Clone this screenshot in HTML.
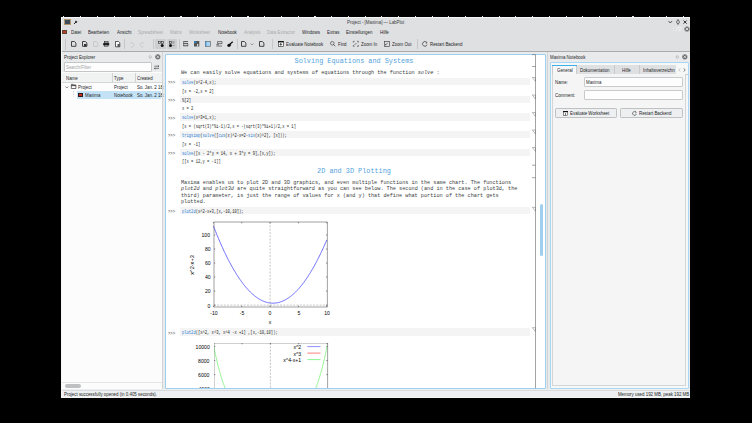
<!DOCTYPE html>
<html><head><meta charset="utf-8">
<style>
html,body{margin:0;padding:0;width:752px;height:423px;overflow:hidden;background:#000;position:relative;}
*{box-sizing:border-box;}
body{font-family:"Liberation Sans",sans-serif;color:#232627;}
.a{position:absolute;}
.t{position:absolute;white-space:nowrap;}
.mono{position:absolute;white-space:nowrap;font-family:"Liberation Mono",monospace;}
svg{position:absolute;overflow:visible;}
</style></head><body>
<div class="a" style="left:61px;top:16.8px;width:629px;height:381px;background:#f4f5f5;"></div>
<div class="a" style="left:62px;top:17.8px;width:628px;height:379.5px;background:#dfe0e1;"></div>
<div class="a" style="left:63.3px;top:15.8px;width:1.2px;height:1.2px;background:#e8e8e8;"></div>
<div class="a" style="left:80.0px;top:15.8px;width:1.2px;height:1.2px;background:#e8e8e8;"></div>
<div class="a" style="left:96.7px;top:15.8px;width:1.2px;height:1.2px;background:#e8e8e8;"></div>
<div class="a" style="left:113.5px;top:15.8px;width:1.2px;height:1.2px;background:#e8e8e8;"></div>
<div class="a" style="left:130.2px;top:15.8px;width:1.2px;height:1.2px;background:#e8e8e8;"></div>
<div class="a" style="left:147.0px;top:15.8px;width:1.2px;height:1.2px;background:#e8e8e8;"></div>
<div class="a" style="left:163.7px;top:15.8px;width:1.2px;height:1.2px;background:#e8e8e8;"></div>
<div class="a" style="left:180.4px;top:15.8px;width:1.2px;height:1.2px;background:#e8e8e8;"></div>
<div class="a" style="left:197.2px;top:15.8px;width:1.2px;height:1.2px;background:#e8e8e8;"></div>
<div class="a" style="left:213.9px;top:15.8px;width:1.2px;height:1.2px;background:#e8e8e8;"></div>
<div class="a" style="left:230.7px;top:15.8px;width:1.2px;height:1.2px;background:#e8e8e8;"></div>
<div class="a" style="left:247.4px;top:15.8px;width:1.2px;height:1.2px;background:#e8e8e8;"></div>
<div class="a" style="left:264.1px;top:15.8px;width:1.2px;height:1.2px;background:#e8e8e8;"></div>
<div class="a" style="left:280.9px;top:15.8px;width:1.2px;height:1.2px;background:#e8e8e8;"></div>
<div class="a" style="left:297.6px;top:15.8px;width:1.2px;height:1.2px;background:#e8e8e8;"></div>
<div class="a" style="left:314.4px;top:15.8px;width:1.2px;height:1.2px;background:#e8e8e8;"></div>
<div class="a" style="left:331.1px;top:15.8px;width:1.2px;height:1.2px;background:#e8e8e8;"></div>
<div class="a" style="left:347.8px;top:15.8px;width:1.2px;height:1.2px;background:#e8e8e8;"></div>
<div class="a" style="left:364.6px;top:15.8px;width:1.2px;height:1.2px;background:#e8e8e8;"></div>
<div class="a" style="left:381.3px;top:15.8px;width:1.2px;height:1.2px;background:#e8e8e8;"></div>
<div class="a" style="left:398.1px;top:15.8px;width:1.2px;height:1.2px;background:#e8e8e8;"></div>
<div class="a" style="left:414.8px;top:15.8px;width:1.2px;height:1.2px;background:#e8e8e8;"></div>
<div class="a" style="left:431.5px;top:15.8px;width:1.2px;height:1.2px;background:#e8e8e8;"></div>
<div class="a" style="left:448.3px;top:15.8px;width:1.2px;height:1.2px;background:#e8e8e8;"></div>
<div class="a" style="left:465.0px;top:15.8px;width:1.2px;height:1.2px;background:#e8e8e8;"></div>
<div class="a" style="left:481.8px;top:15.8px;width:1.2px;height:1.2px;background:#e8e8e8;"></div>
<div class="a" style="left:498.5px;top:15.8px;width:1.2px;height:1.2px;background:#e8e8e8;"></div>
<div class="a" style="left:515.2px;top:15.8px;width:1.2px;height:1.2px;background:#e8e8e8;"></div>
<div class="a" style="left:532.0px;top:15.8px;width:1.2px;height:1.2px;background:#e8e8e8;"></div>
<div class="a" style="left:548.7px;top:15.8px;width:1.2px;height:1.2px;background:#e8e8e8;"></div>
<div class="a" style="left:565.5px;top:15.8px;width:1.2px;height:1.2px;background:#e8e8e8;"></div>
<div class="a" style="left:582.2px;top:15.8px;width:1.2px;height:1.2px;background:#e8e8e8;"></div>
<div class="a" style="left:598.9px;top:15.8px;width:1.2px;height:1.2px;background:#e8e8e8;"></div>
<div class="a" style="left:615.7px;top:15.8px;width:1.2px;height:1.2px;background:#e8e8e8;"></div>
<div class="a" style="left:632.4px;top:15.8px;width:1.2px;height:1.2px;background:#e8e8e8;"></div>
<div class="a" style="left:649.2px;top:15.8px;width:1.2px;height:1.2px;background:#e8e8e8;"></div>
<div class="a" style="left:665.9px;top:15.8px;width:1.2px;height:1.2px;background:#e8e8e8;"></div>
<div class="a" style="left:682.6px;top:15.8px;width:1.2px;height:1.2px;background:#e8e8e8;"></div>
<div class="a" style="left:62px;top:52px;width:628px;height:337px;background:#e9eaeb;"></div>
<div class="a" style="left:62px;top:389px;width:628px;height:8.3px;background:#eeeff0;"></div>
<div class="a" style="left:62px;top:389.8px;width:628px;height:0.7px;background:#d9dadb;"></div>
<div class="a" style="left:64px;top:19px;width:6.5px;height:5.5px;background:#3d4d5c;border:0.6px solid #b09870;"></div>
<svg style="left:73px;top:19.5px" width="5" height="5"><path d="M1,4 L3,2 M2.2,1.2 L3.8,2.8 M3,0.8 L4.2,2" stroke="#222" stroke-width="1" fill="none"/></svg>
<div class="t" style="left:347px;top:19.00px;font-size:5.19px;line-height:6px;transform:scaleX(0.847);transform-origin:0 50%;color:#3a3c3e;">Project - [Maxima] — LabPlot</div>
<svg style="left:667.5px;top:20px" width="5" height="4"><path d="M0.5,1 L2.3,3 L4.1,1" stroke="#333" stroke-width="0.8" fill="none"/></svg>
<svg style="left:675.5px;top:19px" width="4" height="6"><path d="M2,0.5 L3.5,3 L2,5.5 L0.5,3 Z" stroke="#333" stroke-width="0.7" fill="none"/></svg>
<svg style="left:683px;top:19.8px" width="5" height="5"><path d="M0.5,0.5 L3.7,3.7 M3.7,0.5 L0.5,3.7" stroke="#333" stroke-width="1" fill="none"/></svg>
<svg style="left:672.5px;top:27px" width="10" height="5"><rect x="0" y="0" width="3.8" height="3.6" fill="#f0f0f0"/><rect x="4.8" y="0" width="3.8" height="3.6" fill="#f0f0f0"/><path d="M0.5,1 H3.3 M0.5,2.6 H3.3 M5.3,2.6 L6.7,1 L8.1,2.6" stroke="#bbb" stroke-width="0.5" fill="none"/></svg>
<svg style="left:683.5px;top:26px" width="6" height="6"><circle cx="3" cy="3" r="2.6" fill="#707274"/><path d="M1.6,1.6 L4.4,4.4 M4.4,1.6 L1.6,4.4" stroke="#f4f4f4" stroke-width="0.75"/></svg>
<div class="a" style="left:62px;top:30px;width:5px;height:4px;background:#c0392b;border:0.6px solid #5a4a30;"></div>
<div class="t" style="left:71px;top:29.00px;font-size:5.19px;line-height:6px;transform:scaleX(0.847);transform-origin:0 50%;color:#232527;">Datei</div>
<div class="t" style="left:88px;top:29.00px;font-size:5.19px;line-height:6px;transform:scaleX(0.847);transform-origin:0 50%;color:#232527;">Bearbeiten</div>
<div class="t" style="left:117px;top:29.00px;font-size:5.19px;line-height:6px;transform:scaleX(0.847);transform-origin:0 50%;color:#232527;">Ansicht</div>
<div class="t" style="left:137.5px;top:29.00px;font-size:5.19px;line-height:6px;transform:scaleX(0.847);transform-origin:0 50%;color:#a9abad;">Spreadsheet</div>
<div class="t" style="left:169.7px;top:29.00px;font-size:5.19px;line-height:6px;transform:scaleX(0.847);transform-origin:0 50%;color:#a9abad;">Matrix</div>
<div class="t" style="left:189.4px;top:29.00px;font-size:5.19px;line-height:6px;transform:scaleX(0.847);transform-origin:0 50%;color:#a9abad;">Worksheet</div>
<div class="t" style="left:217.6px;top:29.00px;font-size:5.19px;line-height:6px;transform:scaleX(0.847);transform-origin:0 50%;color:#232527;">Notebook</div>
<div class="t" style="left:244.3px;top:29.00px;font-size:5.19px;line-height:6px;transform:scaleX(0.847);transform-origin:0 50%;color:#a9abad;">Analysis</div>
<div class="t" style="left:267px;top:29.00px;font-size:5.19px;line-height:6px;transform:scaleX(0.847);transform-origin:0 50%;color:#a9abad;">Data Extractor</div>
<div class="t" style="left:302.3px;top:29.00px;font-size:5.19px;line-height:6px;transform:scaleX(0.847);transform-origin:0 50%;color:#232527;">Windows</div>
<div class="t" style="left:327.2px;top:29.00px;font-size:5.19px;line-height:6px;transform:scaleX(0.847);transform-origin:0 50%;color:#232527;">Extras</div>
<div class="t" style="left:345.8px;top:29.00px;font-size:5.19px;line-height:6px;transform:scaleX(0.847);transform-origin:0 50%;color:#232527;">Einstellungen</div>
<div class="t" style="left:380px;top:29.00px;font-size:5.19px;line-height:6px;transform:scaleX(0.847);transform-origin:0 50%;color:#232527;">Hilfe</div>
<div class="a" style="left:65.2px;top:38.5px;width:1px;height:11px;background:#c2c4c6;"></div>
<div class="a" style="left:124.4px;top:39px;width:0.8px;height:10px;background:#c4c6c8;"></div>
<div class="a" style="left:153.1px;top:39px;width:0.8px;height:10px;background:#c4c6c8;"></div>
<div class="a" style="left:178.8px;top:39px;width:0.8px;height:10px;background:#c4c6c8;"></div>
<div class="a" style="left:236.8px;top:39px;width:0.8px;height:10px;background:#c4c6c8;"></div>
<div class="a" style="left:271.9px;top:39px;width:0.8px;height:10px;background:#c4c6c8;"></div>
<div class="a" style="left:416.8px;top:39px;width:0.8px;height:10px;background:#c4c6c8;"></div>
<div class="a" style="left:155.1px;top:39px;width:10.8px;height:10.2px;background:#cdcecf;border-radius:1px;"></div>
<div class="a" style="left:166.7px;top:39px;width:10.1px;height:10.2px;background:#cdcecf;border-radius:1px;"></div>
<svg style="left:70.5px;top:41.2px" width="6.4" height="6.8"><path d="M0.5,0.5 L3.4,0.5 L4.9,2 L4.9,5.3 L0.5,5.3 Z" stroke="#333" stroke-width="0.9" fill="none"/></svg>
<svg style="left:81.5px;top:41.2px" width="6.4" height="6.8"><path d="M0.5,0.5 L3.4,0.5 L4.9,2 L4.9,5.3 L0.5,5.3 Z" stroke="#333" stroke-width="0.9" fill="none"/></svg>
<svg style="left:84px;top:44px" width="3" height="3"><rect x="0" y="0" width="2.5" height="2.5" fill="#333"/></svg>
<svg style="left:92.7px;top:41.2px" width="6.4" height="6.8"><path d="M0.5,0.5 L3.4,0.5 L4.9,2 L4.9,5.3 L0.5,5.3 Z" stroke="#c4c6c8" stroke-width="0.9" fill="none"/></svg>
<svg style="left:103px;top:41px" width="7" height="6"><rect x="1.3" y="0.3" width="3.8" height="1.6" fill="none" stroke="#222" stroke-width="0.6"/><rect x="0.2" y="2" width="6" height="2.4" fill="#222"/><rect x="1.5" y="4.2" width="3.5" height="1.3" fill="#fff" stroke="#222" stroke-width="0.5"/></svg>
<svg style="left:115px;top:41px" width="6" height="7"><path d="M0.5,0.5 L3.5,0.5 L4.8,1.8 L4.8,5.8 L0.5,5.8 Z" fill="#fff" stroke="#333" stroke-width="0.8"/><path d="M2.5,3 L4.8,3 L4.8,5.8 L2.5,5.8 Z" fill="#555"/></svg>
<svg style="left:128.8px;top:42px" width="6" height="6"><path d="M1,1.5 A2.2,2.2 0 1 1 1.8,4.8" stroke="#c0c2c4" stroke-width="0.7" fill="none"/></svg>
<svg style="left:139.6px;top:42px" width="6" height="6"><path d="M4.3,1.5 A2.2,2.2 0 1 0 3.5,4.8" stroke="#c0c2c4" stroke-width="0.7" fill="none"/></svg>
<svg style="left:157.5px;top:41px" width="7" height="7"><rect x="0.3" y="0.3" width="2.2" height="2" fill="none" stroke="#333" stroke-width="0.6"/><rect x="3.3" y="0.3" width="2.2" height="2" fill="none" stroke="#333" stroke-width="0.6"/><circle cx="4.2" cy="4.6" r="1.5" fill="#111"/></svg>
<svg style="left:168.5px;top:41px" width="7" height="7"><rect x="0.3" y="0.3" width="2.2" height="2" fill="none" stroke="#333" stroke-width="0.6"/><path d="M3.3,0.8 H5.5 M3.3,2 H5.5 M3.3,4.5 H5.5" stroke="#555" stroke-width="0.5"/><circle cx="1.5" cy="4.6" r="1.5" fill="#111"/></svg>
<svg style="left:182.8px;top:41.3px" width="6" height="6"><path d="M0.3,0.6 H5 M0.3,2.6 H5 M0.3,4.8 H5" stroke="#444" stroke-width="0.9"/><path d="M0.6,0.6 V5 M4.8,2.6 V5" stroke="#444" stroke-width="0.6"/></svg>
<svg style="left:193.6px;top:41.3px" width="6" height="6"><rect x="0" y="0" width="5.3" height="5.5" fill="#555"/><rect x="0.3" y="0.3" width="1.8" height="1.8" fill="#2a8ed8"/><rect x="3" y="3" width="1.2" height="2.5" fill="#ddd"/></svg>
<svg style="left:204.7px;top:41.3px" width="6" height="6"><rect x="0.3" y="0.3" width="5" height="5" fill="#a8d4f4" stroke="#555" stroke-width="0.6"/><path d="M1,0.3 V5.3" stroke="#2a8ed8" stroke-width="0.7"/></svg>
<svg style="left:215.5px;top:41.3px" width="7" height="6"><path d="M1.5,0.6 H6 V2.6 H1.5 Z M0.3,3.6 H3 M0.3,5 H6" stroke="#444" stroke-width="0.7" fill="none"/></svg>
<svg style="left:226.7px;top:41px" width="7" height="7"><path d="M0.5,5.5 L2.5,2.5 L4.5,4 Z" fill="#111"/><path d="M3,3 L5.8,0.8" stroke="#111" stroke-width="1.3"/><circle cx="2" cy="4.3" r="1.6" fill="#111"/></svg>
<svg style="left:241px;top:41.2px" width="6.4" height="6.8"><path d="M0.5,0.5 L3.4,0.5 L4.9,2 L4.9,5.3 L0.5,5.3 Z" stroke="#333" stroke-width="0.9" fill="none"/></svg>
<svg style="left:250.4px;top:43px" width="5" height="3"><path d="M0.5,0.5 L2,2 L3.5,0.5" stroke="#666" stroke-width="0.6" fill="none"/></svg>
<svg style="left:259.1px;top:41.2px" width="6.4" height="6.8"><path d="M0.5,0.5 L3.4,0.5 L4.9,2 L4.9,5.3 L0.5,5.3 Z" stroke="#333" stroke-width="0.9" fill="none"/></svg>
<svg style="left:277.9px;top:41px" width="6" height="6"><rect x="0.3" y="0.3" width="5" height="5" fill="#fff" stroke="#222" stroke-width="0.6"/><rect x="0" y="0" width="5.6" height="1.4" fill="#111"/><path d="M2.8,2.3 L1.8,3.5 H3.8 Z M2.8,3.3 V5" stroke="#222" stroke-width="0.5" fill="#222"/></svg>
<div class="t" style="left:285.8px;top:41.20px;font-size:5.19px;line-height:6px;transform:scaleX(0.847);transform-origin:0 50%;color:#232527;">Evaluate Notebook</div>
<svg style="left:329.5px;top:41px" width="6" height="6"><circle cx="2.3" cy="2.3" r="1.8" stroke="#333" stroke-width="0.6" fill="none"/><path d="M3.5,3.5 L5.3,5.3" stroke="#333" stroke-width="0.7"/></svg>
<div class="t" style="left:337.8px;top:41.20px;font-size:5.19px;line-height:6px;transform:scaleX(0.847);transform-origin:0 50%;color:#232527;">Find</div>
<svg style="left:353px;top:41px" width="6" height="6"><path d="M0.3,1.6 V0.3 H1.6 M4,0.3 H5.3 V1.6 M5.3,4 V5.3 H4 M1.6,5.3 H0.3 V4" stroke="#333" stroke-width="0.6" fill="none"/><path d="M1.5,4 L3.5,2" stroke="#333" stroke-width="0.6"/></svg>
<div class="t" style="left:360.7px;top:41.20px;font-size:5.19px;line-height:6px;transform:scaleX(0.847);transform-origin:0 50%;color:#232527;">Zoom In</div>
<svg style="left:384.3px;top:41px" width="6" height="6"><rect x="0.3" y="0.3" width="5" height="5" stroke="#333" stroke-width="0.6" fill="none"/><path d="M1.5,4 L3.8,1.7 M2.3,4 H1.5 V3.2" stroke="#333" stroke-width="0.6" fill="none"/></svg>
<div class="t" style="left:392px;top:41.20px;font-size:5.19px;line-height:6px;transform:scaleX(0.847);transform-origin:0 50%;color:#232527;">Zoom Out</div>
<svg style="left:421.8px;top:41.2px" width="6" height="6"><path d="M4.6,1.5 A2.3,2.3 0 1 0 5,3.6" stroke="#333" stroke-width="0.7" fill="none"/><path d="M3.8,0.6 L5.2,1.6 L4,2.6" stroke="#333" stroke-width="0.6" fill="none"/></svg>
<div class="t" style="left:429.8px;top:41.20px;font-size:5.19px;line-height:6px;transform:scaleX(0.847);transform-origin:0 50%;color:#232527;">Restart Backend</div>
<div class="a" style="left:62px;top:51px;width:628px;height:0.9px;background:#a9abad;"></div>
<div class="t" style="left:64.2px;top:53.70px;font-size:5.19px;line-height:6px;transform:scaleX(0.847);transform-origin:0 50%;color:#232527;">Project Explorer</div>
<svg style="left:147.5px;top:54.5px" width="5" height="5"><path d="M2.2,0.5 L3.6,2 L2.2,3.5 L0.8,2 Z" stroke="#888" stroke-width="0.5" fill="none"/></svg>
<svg style="left:154.5px;top:53.8px" width="6" height="6"><circle cx="2.8" cy="2.8" r="2.6" fill="#707274"/><path d="M1.5,1.5 L4.1,4.1 M4.1,1.5 L1.5,4.1" stroke="#f0f0f0" stroke-width="0.7"/></svg>
<div class="a" style="left:63.5px;top:62px;width:88px;height:9.8px;background:#fdfdfd;border:0.7px solid #c4c6c8;border-radius:1px;"></div>
<div class="t" style="left:65.8px;top:64.00px;font-size:5.19px;line-height:6px;transform:scaleX(0.847);transform-origin:0 50%;color:#a2a4a6;">Search/Filter</div>
<svg style="left:153.8px;top:64.5px" width="6" height="5"><path d="M0.3,1.2 H5 M0.3,3.4 H5" stroke="#333" stroke-width="0.6"/><path d="M3.8,0.2 L5,1.2 L3.8,2.2 M1.5,2.4 L0.3,3.4 L1.5,4.4" stroke="#333" stroke-width="0.5" fill="none"/></svg>
<div class="a" style="left:62px;top:72.2px;width:99.5px;height:316.5px;background:#fcfcfc;"></div>
<div class="a" style="left:62px;top:73px;width:99.5px;height:9px;background:#f1f2f2;"></div>
<div class="a" style="left:62px;top:82px;width:99.5px;height:0.6px;background:#d6d7d8;"></div>
<div class="a" style="left:111.5px;top:73px;width:0.7px;height:9px;background:#d0d1d2;"></div>
<div class="a" style="left:135.2px;top:73px;width:0.7px;height:9px;background:#d0d1d2;"></div>
<div class="t" style="left:65.5px;top:74.50px;font-size:5.19px;line-height:6px;transform:scaleX(0.847);transform-origin:0 50%;color:#232527;">Name</div>
<div class="t" style="left:113.6px;top:74.50px;font-size:5.19px;line-height:6px;transform:scaleX(0.847);transform-origin:0 50%;color:#232527;">Type</div>
<div class="t" style="left:136.8px;top:74.50px;font-size:5.19px;line-height:6px;transform:scaleX(0.847);transform-origin:0 50%;color:#232527;">Created</div>
<svg style="left:65px;top:85.6px" width="4" height="3"><path d="M0.4,0.5 L1.9,2 L3.4,0.5" stroke="#444" stroke-width="0.6" fill="none"/></svg>
<svg style="left:71px;top:84px" width="6" height="6"><path d="M0.35,0.35 H2.2 L2.7,1 H4.9 V4.5 H0.35 Z" stroke="#333" stroke-width="0.7" fill="none"/><path d="M0.35,1.6 H4.9" stroke="#333" stroke-width="0.9"/></svg>
<div class="t" style="left:78.2px;top:84.00px;font-size:5.19px;line-height:6px;transform:scaleX(0.847);transform-origin:0 50%;color:#232527;">Project</div>
<div class="t" style="left:113.6px;top:84.00px;font-size:5.19px;line-height:6px;transform:scaleX(0.847);transform-origin:0 50%;color:#232527;">Project</div>
<div class="t" style="left:136.8px;top:84.00px;font-size:5.19px;line-height:6px;transform:scaleX(0.847);transform-origin:0 50%;color:#232527;">So. Jan. 2 18:</div>
<svg style="left:73px;top:90.5px" width="2" height="6"><path d="M0.6,0 V5.5" stroke="#999" stroke-width="0.5" stroke-dasharray="0.8,0.8"/></svg>
<div class="a" style="left:76.8px;top:91.2px;width:84.7px;height:8.2px;background:#c4e2f6;"></div>
<div class="a" style="left:77.7px;top:93px;width:5.3px;height:4.4px;background:#d02a20;border:0.8px solid #2b2020;"></div>
<div class="t" style="left:85px;top:92.20px;font-size:5.19px;line-height:6px;transform:scaleX(0.847);transform-origin:0 50%;color:#232527;">Maxima</div>
<div class="t" style="left:113.6px;top:92.20px;font-size:5.19px;line-height:6px;transform:scaleX(0.847);transform-origin:0 50%;color:#232527;">Notebook</div>
<div class="t" style="left:136.8px;top:92.20px;font-size:5.19px;line-height:6px;transform:scaleX(0.847);transform-origin:0 50%;color:#232527;">So. Jan. 2 18:</div>
<div class="a" style="left:62px;top:382px;width:99.5px;height:0.6px;background:#e3e4e5;"></div>
<div class="a" style="left:65px;top:384px;width:16px;height:3.6px;background:#bfc0c1;border-radius:2px;"></div>
<div class="a" style="left:161.6px;top:52px;width:0.8px;height:337px;background:#d3d4d5;"></div>
<div class="a" style="left:165px;top:54px;width:381px;height:335px;background:#fff;border:1px solid #9dd0f0;border-radius:1px;"></div>
<div class="a" style="left:546.8px;top:52px;width:0.8px;height:337px;background:#d3d4d5;"></div>
<div class="t" style="left:550px;top:53.70px;font-size:5.19px;line-height:6px;transform:scaleX(0.847);transform-origin:0 50%;color:#232527;">Maxima Notebook</div>
<svg style="left:674.5px;top:54.5px" width="5" height="5"><path d="M2.2,0.5 L3.6,2 L2.2,3.5 L0.8,2 Z" stroke="#888" stroke-width="0.5" fill="none"/></svg>
<svg style="left:681.5px;top:53.8px" width="6" height="6"><circle cx="2.8" cy="2.8" r="2.6" fill="#707274"/><path d="M1.5,1.5 L4.1,4.1 M4.1,1.5 L1.5,4.1" stroke="#f0f0f0" stroke-width="0.7"/></svg>
<div class="a" style="left:549.5px;top:61.8px;width:139.5px;height:327.5px;background:#f6f7f7;border:0.8px solid #a9d7f3;border-radius:1px;"></div>
<div class="a" style="left:577.2px;top:65px;width:37.5px;height:8.6px;background:#dfe0e1;border-right:0.6px solid #c9cacb;"></div>
<div class="a" style="left:614.7px;top:65px;width:25.7px;height:8.6px;background:#dfe0e1;border-right:0.6px solid #c9cacb;"></div>
<div class="a" style="left:640.4px;top:65px;width:35.3px;height:8.6px;background:#dfe0e1;"></div>
<div class="a" style="left:551.9px;top:64.6px;width:25.3px;height:9.5px;background:#f6f7f7;border-left:0.6px solid #c9cacb;border-right:0.6px solid #c9cacb;"></div>
<div class="a" style="left:551.9px;top:64.6px;width:25.3px;height:1.1px;background:#3daee9;"></div>
<div class="a" style="left:551.9px;top:73.6px;width:136px;height:0.6px;background:#c9cacb;"></div>
<div class="a" style="left:577.2px;top:73.6px;width:0px;height:0px;"></div>
<div class="t" style="left:556.8px;top:66.50px;font-size:5.19px;line-height:6px;transform:scaleX(0.847);transform-origin:0 50%;color:#232527;">General</div>
<div class="t" style="left:580.2px;top:66.50px;font-size:5.19px;line-height:6px;transform:scaleX(0.847);transform-origin:0 50%;color:#232527;">Dokumentation</div>
<div class="t" style="left:622.3px;top:66.50px;font-size:5.19px;line-height:6px;transform:scaleX(0.847);transform-origin:0 50%;color:#232527;">Hilfe</div>
<div class="t" style="left:642.5px;top:66.50px;font-size:5.19px;line-height:6px;transform:scaleX(0.847);transform-origin:0 50%;color:#232527;width:39.5px;overflow:hidden;">Inhaltsverzeichn</div>
<svg style="left:677.5px;top:67.5px" width="3" height="4"><path d="M2.2,0.4 L0.8,2 L2.2,3.6" stroke="#999" stroke-width="0.5" fill="none"/></svg>
<svg style="left:683px;top:67.5px" width="3" height="4"><path d="M0.8,0.4 L2.2,2 L0.8,3.6" stroke="#333" stroke-width="0.6" fill="none"/></svg>
<div class="a" style="left:551.9px;top:73.6px;width:134.2px;height:312.6px;background:#f4f5f4;border:0.6px solid #d4d5d6;border-top:none;"></div>
<div class="t" style="left:554.5px;top:79.20px;font-size:5.19px;line-height:6px;transform:scaleX(0.847);transform-origin:0 50%;color:#232527;">Name:</div>
<div class="a" style="left:583.9px;top:77.4px;width:98.8px;height:9.2px;background:#fdfdfd;border:0.6px solid #c8cacb;border-radius:1px;"></div>
<div class="t" style="left:586.1px;top:79.10px;font-size:5.19px;line-height:6px;transform:scaleX(0.847);transform-origin:0 50%;color:#232527;">Maxima</div>
<div class="t" style="left:554.5px;top:91.70px;font-size:5.19px;line-height:6px;transform:scaleX(0.847);transform-origin:0 50%;color:#232527;">Comment:</div>
<div class="a" style="left:583.9px;top:89.6px;width:98.8px;height:10px;background:#fdfdfd;border:0.6px solid #c8cacb;border-radius:1px;"></div>
<div class="a" style="left:555px;top:108.3px;width:62.3px;height:10px;background:#eeeff0;border:0.6px solid #bfc1c3;border-radius:1.2px;"></div>
<div class="a" style="left:620.4px;top:108.3px;width:62.3px;height:10px;background:#eeeff0;border:0.6px solid #bfc1c3;border-radius:1.2px;"></div>
<svg style="left:563.3px;top:111px" width="5" height="5"><rect x="0.3" y="0.3" width="4.4" height="4.4" fill="#fff" stroke="#222" stroke-width="0.5"/><rect x="0" y="0" width="5" height="1.2" fill="#111"/><path d="M2.5,2 V4.4" stroke="#222" stroke-width="0.6"/></svg>
<div class="t" style="left:569.7px;top:110.30px;font-size:5.19px;line-height:6px;transform:scaleX(0.847);transform-origin:0 50%;color:#232527;">Evaluate Worksheet</div>
<svg style="left:632px;top:110.8px" width="5" height="5"><path d="M3.9,1.2 A1.9,1.9 0 1 0 4.3,2.9" stroke="#333" stroke-width="0.6" fill="none"/><path d="M3.2,0.4 L4.4,1.3 L3.3,2.2" stroke="#333" stroke-width="0.5" fill="none"/></svg>
<div class="t" style="left:638.5px;top:110.30px;font-size:5.19px;line-height:6px;transform:scaleX(0.847);transform-origin:0 50%;color:#232527;">Restart Backend</div>
<div class="t" style="left:64.1px;top:391.40px;font-size:5.19px;line-height:6px;transform:scaleX(0.847);transform-origin:0 50%;color:#232527;">Project successfully opened (in 0.405 seconds).</div>
<div class="t" style="right:63.200000000000045px;top:391.40px;font-size:5.19px;line-height:6px;transform:scaleX(0.847);transform-origin:100% 50%;color:#232527;">Memory used 192 MB, peak 192 MB</div>
<div class="mono" style="left:204px;width:300px;text-align:center;top:56.10px;font-size:6.84px;line-height:10px;color:#52a3dc;transform:scaleX(1.000);transform-origin:50% 50%;">Solving Equations and Systems</div>
<div class="mono" style="left:181.2px;top:69.00px;font-size:5.82px;line-height:8px;color:#3a3d40;transform:scaleX(0.893);transform-origin:0 50%;">We can easily solve equations and systems of equations through the function <i>solve</i> :</div>
<div class="a" style="left:180px;top:77.89999999999999px;width:350px;height:7.6px;background:#f4f4f4;"></div>
<div class="mono" style="left:167.8px;top:79.40px;font-size:4.88px;line-height:8px;color:#333;transform:scaleX(0.800);transform-origin:0 50%;">&gt;&gt;&gt;</div>
<div class="mono" style="left:181.8px;top:79.00px;font-size:4.94px;line-height:8px;color:#1c1e20;transform:scaleX(0.769);transform-origin:0 50%;"><span style="color:#2a7fd4">solve</span>(x^2-4,x);</div>
<div class="mono" style="left:181.8px;top:87.70px;font-size:4.94px;line-height:8px;color:#1c1e20;transform:scaleX(0.769);transform-origin:0 50%;">[x = -2,x = 2]</div>
<div class="a" style="left:180px;top:95.54999999999998px;width:350px;height:7.6px;background:#f4f4f4;"></div>
<div class="mono" style="left:167.8px;top:97.05px;font-size:4.88px;line-height:8px;color:#333;transform:scaleX(0.800);transform-origin:0 50%;">&gt;&gt;&gt;</div>
<div class="mono" style="left:181.8px;top:96.65px;font-size:4.94px;line-height:8px;color:#1c1e20;transform:scaleX(0.769);transform-origin:0 50%;">%[2]</div>
<div class="mono" style="left:181.8px;top:105.35px;font-size:4.94px;line-height:8px;color:#1c1e20;transform:scaleX(0.769);transform-origin:0 50%;">x = 2</div>
<div class="a" style="left:180px;top:113.19999999999999px;width:350px;height:7.6px;background:#f4f4f4;"></div>
<div class="mono" style="left:167.8px;top:114.70px;font-size:4.88px;line-height:8px;color:#333;transform:scaleX(0.800);transform-origin:0 50%;">&gt;&gt;&gt;</div>
<div class="mono" style="left:181.8px;top:114.30px;font-size:4.94px;line-height:8px;color:#1c1e20;transform:scaleX(0.769);transform-origin:0 50%;"><span style="color:#2a7fd4">solve</span>(x^3=1,x);</div>
<div class="mono" style="left:181.8px;top:123.00px;font-size:4.94px;line-height:8px;color:#1c1e20;transform:scaleX(0.769);transform-origin:0 50%;">[x = (sqrt(3)*%i-1)/2,x = -(sqrt(3)*%i+1)/2,x = 1]</div>
<div class="a" style="left:180px;top:130.85px;width:350px;height:7.6px;background:#f4f4f4;"></div>
<div class="mono" style="left:167.8px;top:132.35px;font-size:4.88px;line-height:8px;color:#333;transform:scaleX(0.800);transform-origin:0 50%;">&gt;&gt;&gt;</div>
<div class="mono" style="left:181.8px;top:131.95px;font-size:4.94px;line-height:8px;color:#1c1e20;transform:scaleX(0.769);transform-origin:0 50%;"><span style="color:#2a7fd4">trigsimp</span>(<span style="color:#2a7fd4">solve</span>([<span style="color:#2a7fd4">cos</span>(x)^2-x=2-<span style="color:#2a7fd4">sin</span>(x)^2], [x]));</div>
<div class="mono" style="left:181.8px;top:140.65px;font-size:4.94px;line-height:8px;color:#1c1e20;transform:scaleX(0.769);transform-origin:0 50%;">[x = -1]</div>
<div class="a" style="left:180px;top:148.49999999999997px;width:350px;height:7.6px;background:#f4f4f4;"></div>
<div class="mono" style="left:167.8px;top:150.00px;font-size:4.88px;line-height:8px;color:#333;transform:scaleX(0.800);transform-origin:0 50%;">&gt;&gt;&gt;</div>
<div class="mono" style="left:181.8px;top:149.60px;font-size:4.94px;line-height:8px;color:#1c1e20;transform:scaleX(0.769);transform-origin:0 50%;"><span style="color:#2a7fd4">solve</span>([x - 2*y = 14,  x + 3*y = 9],[x,y]);</div>
<div class="mono" style="left:181.8px;top:158.30px;font-size:4.94px;line-height:8px;color:#1c1e20;transform:scaleX(0.769);transform-origin:0 50%;">[[x = 12,y = -1]]</div>
<div class="mono" style="left:204px;width:300px;text-align:center;top:166.30px;font-size:6.84px;line-height:10px;color:#52a3dc;transform:scaleX(1.000);transform-origin:50% 50%;">2D and 3D Plotting</div>
<div class="mono" style="left:181.4px;top:179.10px;font-size:5.82px;line-height:8px;color:#3a3d40;transform:scaleX(0.893);transform-origin:0 50%;">Maxima enables us to plot 2D and 3D graphics, and even multiple functions in the same chart. The functions</div>
<div class="mono" style="left:181.4px;top:185.40px;font-size:5.82px;line-height:8px;color:#3a3d40;transform:scaleX(0.893);transform-origin:0 50%;"><i>plot2d</i> and <i>plot3d</i> are quite straightforward as you can see below. The second (and in the case of plot3d, the</div>
<div class="mono" style="left:181.4px;top:191.70px;font-size:5.82px;line-height:8px;color:#3a3d40;transform:scaleX(0.893);transform-origin:0 50%;">third) parameter, is just the range of values for x (and y) that define what portion of the chart gets</div>
<div class="mono" style="left:181.4px;top:198.00px;font-size:5.82px;line-height:8px;color:#3a3d40;transform:scaleX(0.893);transform-origin:0 50%;">plotted.</div>
<div class="a" style="left:180px;top:206.6px;width:350px;height:7.6px;background:#f4f4f4;"></div>
<div class="mono" style="left:167.8px;top:208.10px;font-size:4.88px;line-height:8px;color:#333;transform:scaleX(0.800);transform-origin:0 50%;">&gt;&gt;&gt;</div>
<div class="mono" style="left:181.8px;top:207.70px;font-size:4.94px;line-height:8px;color:#1c1e20;transform:scaleX(0.769);transform-origin:0 50%;"><span style="color:#2a7fd4">plot2d</span>(x^2-x+3,[x,-10,10]);</div>
<div class="a" style="left:180px;top:328.3px;width:350px;height:7.6px;background:#f4f4f4;"></div>
<div class="mono" style="left:167.8px;top:329.80px;font-size:4.88px;line-height:8px;color:#333;transform:scaleX(0.800);transform-origin:0 50%;">&gt;&gt;&gt;</div>
<div class="mono" style="left:181.8px;top:329.40px;font-size:4.94px;line-height:8px;color:#1c1e20;transform:scaleX(0.769);transform-origin:0 50%;"><span style="color:#2a7fd4">plot2d</span>([x^2, x^3, x^4 -x +1] ,[x,-10,10]);</div>
<svg style="left:214.3px;top:222.4px" width="113.19999999999999" height="84.99999999999997"><path d="M-0.60,3.89 L-0.03,5.35 L0.53,6.80 L1.10,8.24 L1.67,9.66 L2.23,11.07 L2.80,12.47 L3.37,13.85 L3.94,15.22 L4.50,16.57 L5.07,17.91 L5.64,19.23 L6.20,20.54 L6.77,21.84 L7.34,23.12 L7.90,24.39 L8.47,25.65 L9.04,26.89 L9.61,28.11 L10.17,29.33 L10.74,30.53 L11.31,31.71 L11.87,32.88 L12.44,34.04 L13.01,35.18 L13.57,36.31 L14.14,37.42 L14.71,38.52 L15.28,39.61 L15.84,40.68 L16.41,41.74 L16.98,42.79 L17.54,43.82 L18.11,44.83 L18.68,45.83 L19.24,46.82 L19.81,47.80 L20.38,48.76 L20.95,49.70 L21.51,50.64 L22.08,51.55 L22.65,52.46 L23.21,53.35 L23.78,54.23 L24.35,55.09 L24.91,55.94 L25.48,56.77 L26.05,57.59 L26.62,58.40 L27.18,59.19 L27.75,59.97 L28.32,60.73 L28.88,61.48 L29.45,62.22 L30.02,62.94 L30.58,63.65 L31.15,64.34 L31.72,65.02 L32.29,65.69 L32.85,66.34 L33.42,66.98 L33.99,67.60 L34.55,68.21 L35.12,68.81 L35.69,69.39 L36.25,69.96 L36.82,70.51 L37.39,71.05 L37.96,71.58 L38.52,72.09 L39.09,72.59 L39.66,73.07 L40.22,73.54 L40.79,73.99 L41.36,74.44 L41.92,74.86 L42.49,75.28 L43.06,75.68 L43.63,76.06 L44.19,76.43 L44.76,76.79 L45.33,77.13 L45.89,77.46 L46.46,77.78 L47.03,78.08 L47.59,78.37 L48.16,78.64 L48.73,78.90 L49.30,79.15 L49.86,79.38 L50.43,79.59 L51.00,79.80 L51.56,79.99 L52.13,80.16 L52.70,80.32 L53.26,80.47 L53.83,80.60 L54.40,80.72 L54.97,80.83 L55.53,80.92 L56.10,81.00 L56.67,81.06 L57.23,81.11 L57.80,81.14 L58.37,81.17 L58.93,81.17 L59.50,81.17 L60.07,81.14 L60.64,81.11 L61.20,81.06 L61.77,81.00 L62.34,80.92 L62.90,80.83 L63.47,80.72 L64.04,80.60 L64.60,80.47 L65.17,80.32 L65.74,80.16 L66.31,79.99 L66.87,79.80 L67.44,79.59 L68.01,79.38 L68.57,79.15 L69.14,78.90 L69.71,78.64 L70.27,78.37 L70.84,78.08 L71.41,77.78 L71.98,77.46 L72.54,77.13 L73.11,76.79 L73.68,76.43 L74.24,76.06 L74.81,75.68 L75.38,75.28 L75.94,74.86 L76.51,74.44 L77.08,73.99 L77.65,73.54 L78.21,73.07 L78.78,72.59 L79.35,72.09 L79.91,71.58 L80.48,71.05 L81.05,70.51 L81.61,69.96 L82.18,69.39 L82.75,68.81 L83.32,68.21 L83.88,67.60 L84.45,66.98 L85.02,66.34 L85.58,65.69 L86.15,65.02 L86.72,64.34 L87.28,63.65 L87.85,62.94 L88.42,62.22 L88.99,61.48 L89.55,60.73 L90.12,59.97 L90.69,59.19 L91.25,58.40 L91.82,57.59 L92.39,56.77 L92.95,55.94 L93.52,55.09 L94.09,54.23 L94.66,53.35 L95.22,52.46 L95.79,51.55 L96.36,50.64 L96.92,49.70 L97.49,48.76 L98.06,47.80 L98.62,46.82 L99.19,45.83 L99.76,44.83 L100.33,43.82 L100.89,42.79 L101.46,41.74 L102.03,40.68 L102.59,39.61 L103.16,38.52 L103.73,37.42 L104.29,36.31 L104.86,35.18 L105.43,34.04 L106.00,32.88 L106.56,31.71 L107.13,30.53 L107.70,29.33 L108.26,28.11 L108.83,26.89 L109.40,25.65 L109.96,24.39 L110.53,23.12 L111.10,21.84 L111.67,20.54 L112.23,19.23 L112.80,17.91" stroke="#3c3cff" stroke-width="0.75" fill="none"/><path d="M56.10,0 V84.99999999999997" stroke="#a0a0a0" stroke-width="0.6" stroke-dasharray="2,1.3"/><path d="M0,83.10 H113.19999999999999" stroke="#a0a0a0" stroke-width="0.6" stroke-dasharray="2,1.3"/><rect x="0" y="0" width="113.19999999999999" height="84.99999999999997" fill="none" stroke="#555" stroke-width="0.55"/><path d="M0,83.10 h1.3 M113.19999999999999,83.10 h-1.3 M0,69.08 h1.3 M113.19999999999999,69.08 h-1.3 M0,55.06 h1.3 M113.19999999999999,55.06 h-1.3 M0,41.04 h1.3 M113.19999999999999,41.04 h-1.3 M0,27.02 h1.3 M113.19999999999999,27.02 h-1.3 M0,13.00 h1.3 M113.19999999999999,13.00 h-1.3 M-0.60,84.99999999999997 v-1.3 M-0.60,0 v1.3 M27.75,84.99999999999997 v-1.3 M27.75,0 v1.3 M56.10,84.99999999999997 v-1.3 M56.10,0 v1.3 M84.45,84.99999999999997 v-1.3 M84.45,0 v1.3 M112.80,84.99999999999997 v-1.3 M112.80,0 v1.3 " stroke="#222" stroke-width="0.5"/></svg>
<div class="t" style="right:541.6px;top:302.50px;font-size:6.02px;line-height:6px;transform:scaleX(0.847);transform-origin:100% 50%;color:#000;">0</div>
<div class="t" style="right:541.6px;top:288.48px;font-size:6.02px;line-height:6px;transform:scaleX(0.847);transform-origin:100% 50%;color:#000;">20</div>
<div class="t" style="right:541.6px;top:274.46px;font-size:6.02px;line-height:6px;transform:scaleX(0.847);transform-origin:100% 50%;color:#000;">40</div>
<div class="t" style="right:541.6px;top:260.44px;font-size:6.02px;line-height:6px;transform:scaleX(0.847);transform-origin:100% 50%;color:#000;">60</div>
<div class="t" style="right:541.6px;top:246.42px;font-size:6.02px;line-height:6px;transform:scaleX(0.847);transform-origin:100% 50%;color:#000;">80</div>
<div class="t" style="right:541.6px;top:232.40px;font-size:6.02px;line-height:6px;transform:scaleX(0.847);transform-origin:100% 50%;color:#000;">100</div>
<div class="t" style="left:113.69999999999999px;width:200px;text-align:center;top:310.10px;font-size:6.02px;line-height:6px;transform:scaleX(0.847);transform-origin:50% 50%;color:#000;">-10</div>
<div class="t" style="left:142.04999999999998px;width:200px;text-align:center;top:310.10px;font-size:6.02px;line-height:6px;transform:scaleX(0.847);transform-origin:50% 50%;color:#000;">-5</div>
<div class="t" style="left:170.39999999999998px;width:200px;text-align:center;top:310.10px;font-size:6.02px;line-height:6px;transform:scaleX(0.847);transform-origin:50% 50%;color:#000;">0</div>
<div class="t" style="left:198.75px;width:200px;text-align:center;top:310.10px;font-size:6.02px;line-height:6px;transform:scaleX(0.847);transform-origin:50% 50%;color:#000;">5</div>
<div class="t" style="left:227.09999999999997px;width:200px;text-align:center;top:310.10px;font-size:6.02px;line-height:6px;transform:scaleX(0.847);transform-origin:50% 50%;color:#000;">10</div>
<div class="t" style="left:170.39999999999998px;width:200px;text-align:center;top:319.30px;font-size:6.02px;line-height:6px;transform:scaleX(0.847);transform-origin:50% 50%;color:#000;">x</div>
<div class="t" style="left:171.6px;top:262px;width:40px;height:6px;line-height:6px;text-align:center;font-size:6.0px;color:#000;transform:rotate(-90deg) scaleX(0.93);">x^2-x+3</div>
<div class="a" style="left:214.0px;top:343.4px;width:115.60000000000002px;height:44.900000000000034px;overflow:hidden;"><svg style="left:0;top:0" width="113.60000000000002" height="76.60000000000002"><path d="M-0.30,73.20 L-0.02,73.20 L0.27,73.21 L0.55,73.22 L0.83,73.22 L1.12,73.23 L1.40,73.24 L1.68,73.24 L1.97,73.25 L2.25,73.26 L2.53,73.26 L2.82,73.27 L3.10,73.28 L3.39,73.28 L3.67,73.29 L3.95,73.30 L4.24,73.30 L4.52,73.31 L4.80,73.32 L5.09,73.32 L5.37,73.33 L5.65,73.34 L5.94,73.34 L6.22,73.35 L6.50,73.35 L6.79,73.36 L7.07,73.37 L7.35,73.37 L7.64,73.38 L7.92,73.38 L8.20,73.39 L8.49,73.40 L8.77,73.40 L9.06,73.41 L9.34,73.41 L9.62,73.42 L9.91,73.43 L10.19,73.43 L10.47,73.44 L10.76,73.44 L11.04,73.45 L11.32,73.45 L11.61,73.46 L11.89,73.47 L12.17,73.47 L12.46,73.48 L12.74,73.48 L13.02,73.49 L13.31,73.49 L13.59,73.50 L13.87,73.50 L14.16,73.51 L14.44,73.51 L14.73,73.52 L15.01,73.52 L15.29,73.53 L15.58,73.53 L15.86,73.54 L16.14,73.54 L16.43,73.55 L16.71,73.55 L16.99,73.56 L17.28,73.56 L17.56,73.57 L17.84,73.57 L18.13,73.58 L18.41,73.58 L18.69,73.59 L18.98,73.59 L19.26,73.60 L19.54,73.60 L19.83,73.61 L20.11,73.61 L20.40,73.62 L20.68,73.62 L20.96,73.62 L21.25,73.63 L21.53,73.63 L21.81,73.64 L22.10,73.64 L22.38,73.65 L22.66,73.65 L22.95,73.65 L23.23,73.66 L23.51,73.66 L23.80,73.67 L24.08,73.67 L24.36,73.67 L24.65,73.68 L24.93,73.68 L25.21,73.69 L25.50,73.69 L25.78,73.69 L26.07,73.70 L26.35,73.70 L26.63,73.71 L26.92,73.71 L27.20,73.71 L27.48,73.72 L27.77,73.72 L28.05,73.72 L28.33,73.73 L28.62,73.73 L28.90,73.73 L29.18,73.74 L29.47,73.74 L29.75,73.74 L30.03,73.75 L30.32,73.75 L30.60,73.75 L30.88,73.76 L31.17,73.76 L31.45,73.76 L31.74,73.77 L32.02,73.77 L32.30,73.77 L32.59,73.78 L32.87,73.78 L33.15,73.78 L33.44,73.78 L33.72,73.79 L34.00,73.79 L34.29,73.79 L34.57,73.80 L34.85,73.80 L35.14,73.80 L35.42,73.80 L35.70,73.81 L35.99,73.81 L36.27,73.81 L36.55,73.81 L36.84,73.82 L37.12,73.82 L37.41,73.82 L37.69,73.82 L37.97,73.83 L38.26,73.83 L38.54,73.83 L38.82,73.83 L39.11,73.83 L39.39,73.84 L39.67,73.84 L39.96,73.84 L40.24,73.84 L40.52,73.84 L40.81,73.85 L41.09,73.85 L41.37,73.85 L41.66,73.85 L41.94,73.85 L42.22,73.86 L42.51,73.86 L42.79,73.86 L43.08,73.86 L43.36,73.86 L43.64,73.86 L43.93,73.87 L44.21,73.87 L44.49,73.87 L44.78,73.87 L45.06,73.87 L45.34,73.87 L45.63,73.87 L45.91,73.88 L46.19,73.88 L46.48,73.88 L46.76,73.88 L47.04,73.88 L47.33,73.88 L47.61,73.88 L47.89,73.88 L48.18,73.89 L48.46,73.89 L48.75,73.89 L49.03,73.89 L49.31,73.89 L49.60,73.89 L49.88,73.89 L50.16,73.89 L50.45,73.89 L50.73,73.89 L51.01,73.89 L51.30,73.89 L51.58,73.89 L51.86,73.90 L52.15,73.90 L52.43,73.90 L52.71,73.90 L53.00,73.90 L53.28,73.90 L53.56,73.90 L53.85,73.90 L54.13,73.90 L54.42,73.90 L54.70,73.90 L54.98,73.90 L55.27,73.90 L55.55,73.90 L55.83,73.90 L56.12,73.90 L56.40,73.90 L56.68,73.90 L56.97,73.90 L57.25,73.90 L57.53,73.90 L57.82,73.90 L58.10,73.90 L58.38,73.90 L58.67,73.90 L58.95,73.90 L59.23,73.90 L59.52,73.90 L59.80,73.90 L60.09,73.90 L60.37,73.90 L60.65,73.90 L60.94,73.90 L61.22,73.89 L61.50,73.89 L61.79,73.89 L62.07,73.89 L62.35,73.89 L62.64,73.89 L62.92,73.89 L63.20,73.89 L63.49,73.89 L63.77,73.89 L64.05,73.89 L64.34,73.89 L64.62,73.89 L64.90,73.88 L65.19,73.88 L65.47,73.88 L65.76,73.88 L66.04,73.88 L66.32,73.88 L66.61,73.88 L66.89,73.88 L67.17,73.87 L67.46,73.87 L67.74,73.87 L68.02,73.87 L68.31,73.87 L68.59,73.87 L68.87,73.87 L69.16,73.86 L69.44,73.86 L69.72,73.86 L70.01,73.86 L70.29,73.86 L70.57,73.86 L70.86,73.85 L71.14,73.85 L71.43,73.85 L71.71,73.85 L71.99,73.85 L72.28,73.84 L72.56,73.84 L72.84,73.84 L73.13,73.84 L73.41,73.84 L73.69,73.83 L73.98,73.83 L74.26,73.83 L74.54,73.83 L74.83,73.83 L75.11,73.82 L75.39,73.82 L75.68,73.82 L75.96,73.82 L76.25,73.81 L76.53,73.81 L76.81,73.81 L77.10,73.81 L77.38,73.80 L77.66,73.80 L77.95,73.80 L78.23,73.80 L78.51,73.79 L78.80,73.79 L79.08,73.79 L79.36,73.78 L79.65,73.78 L79.93,73.78 L80.21,73.78 L80.50,73.77 L80.78,73.77 L81.06,73.77 L81.35,73.76 L81.63,73.76 L81.91,73.76 L82.20,73.75 L82.48,73.75 L82.77,73.75 L83.05,73.74 L83.33,73.74 L83.62,73.74 L83.90,73.73 L84.18,73.73 L84.47,73.73 L84.75,73.72 L85.03,73.72 L85.32,73.72 L85.60,73.71 L85.88,73.71 L86.17,73.71 L86.45,73.70 L86.73,73.70 L87.02,73.69 L87.30,73.69 L87.58,73.69 L87.87,73.68 L88.15,73.68 L88.44,73.67 L88.72,73.67 L89.00,73.67 L89.29,73.66 L89.57,73.66 L89.85,73.65 L90.14,73.65 L90.42,73.65 L90.70,73.64 L90.99,73.64 L91.27,73.63 L91.55,73.63 L91.84,73.62 L92.12,73.62 L92.40,73.62 L92.69,73.61 L92.97,73.61 L93.25,73.60 L93.54,73.60 L93.82,73.59 L94.11,73.59 L94.39,73.58 L94.67,73.58 L94.96,73.57 L95.24,73.57 L95.52,73.56 L95.81,73.56 L96.09,73.55 L96.37,73.55 L96.66,73.54 L96.94,73.54 L97.22,73.53 L97.51,73.53 L97.79,73.52 L98.07,73.52 L98.36,73.51 L98.64,73.51 L98.92,73.50 L99.21,73.50 L99.49,73.49 L99.78,73.49 L100.06,73.48 L100.34,73.48 L100.63,73.47 L100.91,73.47 L101.19,73.46 L101.48,73.45 L101.76,73.45 L102.04,73.44 L102.33,73.44 L102.61,73.43 L102.89,73.43 L103.18,73.42 L103.46,73.41 L103.74,73.41 L104.03,73.40 L104.31,73.40 L104.59,73.39 L104.88,73.38 L105.16,73.38 L105.45,73.37 L105.73,73.37 L106.01,73.36 L106.30,73.35 L106.58,73.35 L106.86,73.34 L107.15,73.34 L107.43,73.33 L107.71,73.32 L108.00,73.32 L108.28,73.31 L108.56,73.30 L108.85,73.30 L109.13,73.29 L109.41,73.28 L109.70,73.28 L109.98,73.27 L110.26,73.26 L110.55,73.26 L110.83,73.25 L111.12,73.24 L111.40,73.24 L111.68,73.23 L111.97,73.22 L112.25,73.22 L112.53,73.21 L112.82,73.20 L113.10,73.20" stroke="#5f5fff" stroke-width="0.6" fill="none"/><path d="M-0.30,80.95 L-0.02,80.84 L0.27,80.74 L0.55,80.64 L0.83,80.54 L1.12,80.43 L1.40,80.33 L1.68,80.24 L1.97,80.14 L2.25,80.04 L2.53,79.94 L2.82,79.85 L3.10,79.76 L3.39,79.66 L3.67,79.57 L3.95,79.48 L4.24,79.39 L4.52,79.30 L4.80,79.21 L5.09,79.13 L5.37,79.04 L5.65,78.95 L5.94,78.87 L6.22,78.79 L6.50,78.70 L6.79,78.62 L7.07,78.54 L7.35,78.46 L7.64,78.38 L7.92,78.31 L8.20,78.23 L8.49,78.15 L8.77,78.08 L9.06,78.00 L9.34,77.93 L9.62,77.86 L9.91,77.79 L10.19,77.72 L10.47,77.65 L10.76,77.58 L11.04,77.51 L11.32,77.44 L11.61,77.38 L11.89,77.31 L12.17,77.25 L12.46,77.18 L12.74,77.12 L13.02,77.06 L13.31,76.99 L13.59,76.93 L13.87,76.87 L14.16,76.82 L14.44,76.76 L14.73,76.70 L15.01,76.64 L15.29,76.59 L15.58,76.53 L15.86,76.48 L16.14,76.42 L16.43,76.37 L16.71,76.32 L16.99,76.27 L17.28,76.22 L17.56,76.17 L17.84,76.12 L18.13,76.07 L18.41,76.02 L18.69,75.97 L18.98,75.93 L19.26,75.88 L19.54,75.84 L19.83,75.79 L20.11,75.75 L20.40,75.71 L20.68,75.66 L20.96,75.62 L21.25,75.58 L21.53,75.54 L21.81,75.50 L22.10,75.46 L22.38,75.42 L22.66,75.39 L22.95,75.35 L23.23,75.31 L23.51,75.28 L23.80,75.24 L24.08,75.21 L24.36,75.17 L24.65,75.14 L24.93,75.11 L25.21,75.07 L25.50,75.04 L25.78,75.01 L26.07,74.98 L26.35,74.95 L26.63,74.92 L26.92,74.89 L27.20,74.86 L27.48,74.84 L27.77,74.81 L28.05,74.78 L28.33,74.76 L28.62,74.73 L28.90,74.70 L29.18,74.68 L29.47,74.66 L29.75,74.63 L30.03,74.61 L30.32,74.59 L30.60,74.56 L30.88,74.54 L31.17,74.52 L31.45,74.50 L31.74,74.48 L32.02,74.46 L32.30,74.44 L32.59,74.42 L32.87,74.40 L33.15,74.39 L33.44,74.37 L33.72,74.35 L34.00,74.33 L34.29,74.32 L34.57,74.30 L34.85,74.29 L35.14,74.27 L35.42,74.26 L35.70,74.24 L35.99,74.23 L36.27,74.22 L36.55,74.20 L36.84,74.19 L37.12,74.18 L37.41,74.17 L37.69,74.15 L37.97,74.14 L38.26,74.13 L38.54,74.12 L38.82,74.11 L39.11,74.10 L39.39,74.09 L39.67,74.08 L39.96,74.07 L40.24,74.06 L40.52,74.05 L40.81,74.05 L41.09,74.04 L41.37,74.03 L41.66,74.02 L41.94,74.02 L42.22,74.01 L42.51,74.00 L42.79,74.00 L43.08,73.99 L43.36,73.99 L43.64,73.98 L43.93,73.98 L44.21,73.97 L44.49,73.97 L44.78,73.96 L45.06,73.96 L45.34,73.95 L45.63,73.95 L45.91,73.94 L46.19,73.94 L46.48,73.94 L46.76,73.93 L47.04,73.93 L47.33,73.93 L47.61,73.93 L47.89,73.92 L48.18,73.92 L48.46,73.92 L48.75,73.92 L49.03,73.92 L49.31,73.91 L49.60,73.91 L49.88,73.91 L50.16,73.91 L50.45,73.91 L50.73,73.91 L51.01,73.91 L51.30,73.91 L51.58,73.90 L51.86,73.90 L52.15,73.90 L52.43,73.90 L52.71,73.90 L53.00,73.90 L53.28,73.90 L53.56,73.90 L53.85,73.90 L54.13,73.90 L54.42,73.90 L54.70,73.90 L54.98,73.90 L55.27,73.90 L55.55,73.90 L55.83,73.90 L56.12,73.90 L56.40,73.90 L56.68,73.90 L56.97,73.90 L57.25,73.90 L57.53,73.90 L57.82,73.90 L58.10,73.90 L58.38,73.90 L58.67,73.90 L58.95,73.90 L59.23,73.90 L59.52,73.90 L59.80,73.90 L60.09,73.90 L60.37,73.90 L60.65,73.90 L60.94,73.90 L61.22,73.90 L61.50,73.89 L61.79,73.89 L62.07,73.89 L62.35,73.89 L62.64,73.89 L62.92,73.89 L63.20,73.89 L63.49,73.89 L63.77,73.88 L64.05,73.88 L64.34,73.88 L64.62,73.88 L64.90,73.88 L65.19,73.87 L65.47,73.87 L65.76,73.87 L66.04,73.87 L66.32,73.86 L66.61,73.86 L66.89,73.86 L67.17,73.85 L67.46,73.85 L67.74,73.84 L68.02,73.84 L68.31,73.83 L68.59,73.83 L68.87,73.82 L69.16,73.82 L69.44,73.81 L69.72,73.81 L70.01,73.80 L70.29,73.80 L70.57,73.79 L70.86,73.78 L71.14,73.78 L71.43,73.77 L71.71,73.76 L71.99,73.75 L72.28,73.75 L72.56,73.74 L72.84,73.73 L73.13,73.72 L73.41,73.71 L73.69,73.70 L73.98,73.69 L74.26,73.68 L74.54,73.67 L74.83,73.66 L75.11,73.65 L75.39,73.63 L75.68,73.62 L75.96,73.61 L76.25,73.60 L76.53,73.58 L76.81,73.57 L77.10,73.56 L77.38,73.54 L77.66,73.53 L77.95,73.51 L78.23,73.50 L78.51,73.48 L78.80,73.47 L79.08,73.45 L79.36,73.43 L79.65,73.41 L79.93,73.40 L80.21,73.38 L80.50,73.36 L80.78,73.34 L81.06,73.32 L81.35,73.30 L81.63,73.28 L81.91,73.26 L82.20,73.24 L82.48,73.21 L82.77,73.19 L83.05,73.17 L83.33,73.14 L83.62,73.12 L83.90,73.10 L84.18,73.07 L84.47,73.04 L84.75,73.02 L85.03,72.99 L85.32,72.96 L85.60,72.94 L85.88,72.91 L86.17,72.88 L86.45,72.85 L86.73,72.82 L87.02,72.79 L87.30,72.76 L87.58,72.73 L87.87,72.69 L88.15,72.66 L88.44,72.63 L88.72,72.59 L89.00,72.56 L89.29,72.52 L89.57,72.49 L89.85,72.45 L90.14,72.41 L90.42,72.38 L90.70,72.34 L90.99,72.30 L91.27,72.26 L91.55,72.22 L91.84,72.18 L92.12,72.14 L92.40,72.09 L92.69,72.05 L92.97,72.01 L93.25,71.96 L93.54,71.92 L93.82,71.87 L94.11,71.83 L94.39,71.78 L94.67,71.73 L94.96,71.68 L95.24,71.63 L95.52,71.58 L95.81,71.53 L96.09,71.48 L96.37,71.43 L96.66,71.38 L96.94,71.32 L97.22,71.27 L97.51,71.21 L97.79,71.16 L98.07,71.10 L98.36,71.04 L98.64,70.98 L98.92,70.93 L99.21,70.87 L99.49,70.81 L99.78,70.74 L100.06,70.68 L100.34,70.62 L100.63,70.55 L100.91,70.49 L101.19,70.42 L101.48,70.36 L101.76,70.29 L102.04,70.22 L102.33,70.15 L102.61,70.08 L102.89,70.01 L103.18,69.94 L103.46,69.87 L103.74,69.80 L104.03,69.72 L104.31,69.65 L104.59,69.57 L104.88,69.49 L105.16,69.42 L105.45,69.34 L105.73,69.26 L106.01,69.18 L106.30,69.10 L106.58,69.01 L106.86,68.93 L107.15,68.85 L107.43,68.76 L107.71,68.67 L108.00,68.59 L108.28,68.50 L108.56,68.41 L108.85,68.32 L109.13,68.23 L109.41,68.14 L109.70,68.04 L109.98,67.95 L110.26,67.86 L110.55,67.76 L110.83,67.66 L111.12,67.56 L111.40,67.47 L111.68,67.37 L111.97,67.26 L112.25,67.16 L112.53,67.06 L112.82,66.96 L113.10,66.85" stroke="#ff4a4a" stroke-width="0.6" fill="none"/><path d="M-0.30,3.32 L-0.02,4.72 L0.27,6.10 L0.55,7.46 L0.83,8.80 L1.12,10.11 L1.40,11.41 L1.68,12.69 L1.97,13.95 L2.25,15.18 L2.53,16.40 L2.82,17.60 L3.10,18.78 L3.39,19.95 L3.67,21.09 L3.95,22.22 L4.24,23.32 L4.52,24.41 L4.80,25.48 L5.09,26.54 L5.37,27.57 L5.65,28.59 L5.94,29.60 L6.22,30.58 L6.50,31.55 L6.79,32.51 L7.07,33.44 L7.35,34.36 L7.64,35.27 L7.92,36.16 L8.20,37.03 L8.49,37.89 L8.77,38.73 L9.06,39.56 L9.34,40.38 L9.62,41.18 L9.91,41.96 L10.19,42.73 L10.47,43.49 L10.76,44.23 L11.04,44.96 L11.32,45.68 L11.61,46.38 L11.89,47.07 L12.17,47.74 L12.46,48.41 L12.74,49.06 L13.02,49.69 L13.31,50.32 L13.59,50.93 L13.87,51.53 L14.16,52.12 L14.44,52.70 L14.73,53.27 L15.01,53.82 L15.29,54.36 L15.58,54.90 L15.86,55.42 L16.14,55.93 L16.43,56.43 L16.71,56.92 L16.99,57.40 L17.28,57.86 L17.56,58.32 L17.84,58.77 L18.13,59.21 L18.41,59.64 L18.69,60.06 L18.98,60.47 L19.26,60.87 L19.54,61.26 L19.83,61.65 L20.11,62.02 L20.40,62.39 L20.68,62.74 L20.96,63.09 L21.25,63.43 L21.53,63.76 L21.81,64.09 L22.10,64.41 L22.38,64.71 L22.66,65.01 L22.95,65.31 L23.23,65.59 L23.51,65.87 L23.80,66.15 L24.08,66.41 L24.36,66.67 L24.65,66.92 L24.93,67.16 L25.21,67.40 L25.50,67.63 L25.78,67.86 L26.07,68.08 L26.35,68.29 L26.63,68.50 L26.92,68.70 L27.20,68.90 L27.48,69.09 L27.77,69.27 L28.05,69.45 L28.33,69.63 L28.62,69.79 L28.90,69.96 L29.18,70.12 L29.47,70.27 L29.75,70.42 L30.03,70.56 L30.32,70.70 L30.60,70.84 L30.88,70.97 L31.17,71.10 L31.45,71.22 L31.74,71.34 L32.02,71.45 L32.30,71.56 L32.59,71.67 L32.87,71.77 L33.15,71.87 L33.44,71.97 L33.72,72.06 L34.00,72.15 L34.29,72.23 L34.57,72.32 L34.85,72.40 L35.14,72.47 L35.42,72.55 L35.70,72.62 L35.99,72.68 L36.27,72.75 L36.55,72.81 L36.84,72.87 L37.12,72.93 L37.41,72.98 L37.69,73.03 L37.97,73.08 L38.26,73.13 L38.54,73.18 L38.82,73.22 L39.11,73.26 L39.39,73.30 L39.67,73.34 L39.96,73.37 L40.24,73.41 L40.52,73.44 L40.81,73.47 L41.09,73.50 L41.37,73.53 L41.66,73.55 L41.94,73.58 L42.22,73.60 L42.51,73.62 L42.79,73.64 L43.08,73.66 L43.36,73.68 L43.64,73.70 L43.93,73.71 L44.21,73.73 L44.49,73.74 L44.78,73.75 L45.06,73.77 L45.34,73.78 L45.63,73.79 L45.91,73.80 L46.19,73.81 L46.48,73.81 L46.76,73.82 L47.04,73.83 L47.33,73.84 L47.61,73.84 L47.89,73.85 L48.18,73.85 L48.46,73.86 L48.75,73.86 L49.03,73.86 L49.31,73.87 L49.60,73.87 L49.88,73.87 L50.16,73.87 L50.45,73.88 L50.73,73.88 L51.01,73.88 L51.30,73.88 L51.58,73.88 L51.86,73.88 L52.15,73.89 L52.43,73.89 L52.71,73.89 L53.00,73.89 L53.28,73.89 L53.56,73.89 L53.85,73.89 L54.13,73.89 L54.42,73.89 L54.70,73.89 L54.98,73.89 L55.27,73.89 L55.55,73.89 L55.83,73.89 L56.12,73.89 L56.40,73.89 L56.68,73.89 L56.97,73.89 L57.25,73.89 L57.53,73.89 L57.82,73.89 L58.10,73.90 L58.38,73.90 L58.67,73.90 L58.95,73.90 L59.23,73.90 L59.52,73.90 L59.80,73.90 L60.09,73.90 L60.37,73.90 L60.65,73.90 L60.94,73.90 L61.22,73.90 L61.50,73.89 L61.79,73.89 L62.07,73.89 L62.35,73.89 L62.64,73.89 L62.92,73.89 L63.20,73.89 L63.49,73.88 L63.77,73.88 L64.05,73.88 L64.34,73.88 L64.62,73.87 L64.90,73.87 L65.19,73.86 L65.47,73.86 L65.76,73.85 L66.04,73.85 L66.32,73.84 L66.61,73.83 L66.89,73.82 L67.17,73.81 L67.46,73.80 L67.74,73.79 L68.02,73.78 L68.31,73.77 L68.59,73.76 L68.87,73.74 L69.16,73.73 L69.44,73.71 L69.72,73.69 L70.01,73.68 L70.29,73.66 L70.57,73.64 L70.86,73.61 L71.14,73.59 L71.43,73.56 L71.71,73.54 L71.99,73.51 L72.28,73.48 L72.56,73.45 L72.84,73.41 L73.13,73.38 L73.41,73.34 L73.69,73.30 L73.98,73.26 L74.26,73.22 L74.54,73.18 L74.83,73.13 L75.11,73.08 L75.39,73.03 L75.68,72.97 L75.96,72.92 L76.25,72.86 L76.53,72.80 L76.81,72.73 L77.10,72.67 L77.38,72.60 L77.66,72.53 L77.95,72.45 L78.23,72.37 L78.51,72.29 L78.80,72.20 L79.08,72.12 L79.36,72.02 L79.65,71.93 L79.93,71.83 L80.21,71.73 L80.50,71.62 L80.78,71.51 L81.06,71.40 L81.35,71.28 L81.63,71.16 L81.91,71.03 L82.20,70.90 L82.48,70.77 L82.77,70.63 L83.05,70.49 L83.33,70.34 L83.62,70.18 L83.90,70.03 L84.18,69.86 L84.47,69.70 L84.75,69.52 L85.03,69.34 L85.32,69.16 L85.60,68.97 L85.88,68.77 L86.17,68.57 L86.45,68.37 L86.73,68.15 L87.02,67.94 L87.30,67.71 L87.58,67.48 L87.87,67.24 L88.15,67.00 L88.44,66.75 L88.72,66.49 L89.00,66.23 L89.29,65.96 L89.57,65.68 L89.85,65.39 L90.14,65.10 L90.42,64.80 L90.70,64.49 L90.99,64.17 L91.27,63.85 L91.55,63.52 L91.84,63.18 L92.12,62.83 L92.40,62.48 L92.69,62.11 L92.97,61.74 L93.25,61.35 L93.54,60.96 L93.82,60.56 L94.11,60.15 L94.39,59.73 L94.67,59.31 L94.96,58.87 L95.24,58.42 L95.52,57.96 L95.81,57.49 L96.09,57.02 L96.37,56.53 L96.66,56.03 L96.94,55.52 L97.22,55.00 L97.51,54.47 L97.79,53.92 L98.07,53.37 L98.36,52.80 L98.64,52.23 L98.92,51.64 L99.21,51.04 L99.49,50.43 L99.78,49.80 L100.06,49.16 L100.34,48.51 L100.63,47.85 L100.91,47.18 L101.19,46.49 L101.48,45.79 L101.76,45.07 L102.04,44.34 L102.33,43.60 L102.61,42.85 L102.89,42.08 L103.18,41.29 L103.46,40.49 L103.74,39.68 L104.03,38.85 L104.31,38.01 L104.59,37.15 L104.88,36.28 L105.16,35.39 L105.45,34.49 L105.73,33.57 L106.01,32.63 L106.30,31.68 L106.58,30.71 L106.86,29.72 L107.15,28.72 L107.43,27.70 L107.71,26.67 L108.00,25.61 L108.28,24.54 L108.56,23.45 L108.85,22.35 L109.13,21.22 L109.41,20.08 L109.70,18.92 L109.98,17.74 L110.26,16.54 L110.55,15.32 L110.83,14.08 L111.12,12.82 L111.40,11.55 L111.68,10.25 L111.97,8.94 L112.25,7.60 L112.53,6.24 L112.82,4.86 L113.10,3.46" stroke="#48ec48" stroke-width="0.6" fill="none"/><path d="M56.40,0 V76.60000000000002" stroke="#a0a0a0" stroke-width="0.6" stroke-dasharray="2,1.3"/><path d="M0,0 V76.60000000000002 M113.60000000000002,0 V76.60000000000002 M0,0 H113.60000000000002" stroke="#555" stroke-width="0.55" fill="none"/><path d="M0,3.40 h1.3 M113.60000000000002,3.40 h-1.3 M0,17.50 h1.3 M113.60000000000002,17.50 h-1.3 M0,31.60 h1.3 M113.60000000000002,31.60 h-1.3 M0,45.70 h1.3 M113.60000000000002,45.70 h-1.3 M-0.30,0 v1.3 M28.05,0 v1.3 M56.40,0 v1.3 M84.75,0 v1.3 M113.10,0 v1.3 " stroke="#222" stroke-width="0.5"/><path d="M93.30000000000001,3.6000000000000227 H106.5" stroke="#5f5fff" stroke-width="0.7"/><path d="M93.30000000000001,10.100000000000023 H106.5" stroke="#ff4a4a" stroke-width="0.7"/><path d="M93.30000000000001,16.600000000000023 H106.5" stroke="#5fef5f" stroke-width="0.7"/></svg></div>
<div class="t" style="right:542.2px;top:343.80px;font-size:6.02px;line-height:6px;transform:scaleX(0.847);transform-origin:100% 50%;color:#000;">10000</div>
<div class="t" style="right:542.2px;top:357.90px;font-size:6.02px;line-height:6px;transform:scaleX(0.847);transform-origin:100% 50%;color:#000;">8000</div>
<div class="t" style="right:542.2px;top:372.00px;font-size:6.02px;line-height:6px;transform:scaleX(0.847);transform-origin:100% 50%;color:#000;">6000</div>
<div class="a" style="left:190px;top:386.1px;width:22px;height:2.1999999999999886px;overflow:hidden;"><div class="t" style="right:2.2px;top:0;line-height:6px;font-size:5.1px;color:#111">4000</div></div>
<div class="t" style="right:451px;top:344.00px;font-size:6.02px;line-height:6px;transform:scaleX(0.847);transform-origin:100% 50%;color:#000;">x^2</div>
<div class="t" style="right:451px;top:350.50px;font-size:6.02px;line-height:6px;transform:scaleX(0.847);transform-origin:100% 50%;color:#000;">x^3</div>
<div class="t" style="right:451px;top:357.00px;font-size:6.02px;line-height:6px;transform:scaleX(0.847);transform-origin:100% 50%;color:#000;">x^4-x+1</div>
<svg style="left:165px;top:54px" width="381" height="335"><path d="M370.5,0.6000000000000014 V334.3 M367,0.60 H370.5 M367,12.50 H370.5 M367,111.20 H370.5 M367,123.70 H370.5 " stroke="#666" stroke-width="0.6" fill="none"/><path d="M367.29999999999995,23.50 H370.5 L370.5,27.50 Z" stroke="#777" stroke-width="0.5" fill="none"/><path d="M367.29999999999995,41.00 H370.5 L370.5,45.00 Z" stroke="#777" stroke-width="0.5" fill="none"/><path d="M367.29999999999995,58.50 H370.5 L370.5,62.50 Z" stroke="#777" stroke-width="0.5" fill="none"/><path d="M367.29999999999995,76.00 H370.5 L370.5,80.00 Z" stroke="#777" stroke-width="0.5" fill="none"/><path d="M367.29999999999995,93.50 H370.5 L370.5,97.50 Z" stroke="#777" stroke-width="0.5" fill="none"/><path d="M367.29999999999995,153.30 H370.5 L370.5,157.30 Z" stroke="#777" stroke-width="0.5" fill="none"/><path d="M367.29999999999995,273.70 H370.5 L370.5,277.70 Z" stroke="#777" stroke-width="0.5" fill="none"/></svg>
<div class="a" style="left:540.1px;top:203.6px;width:3.2px;height:52.6px;background:#a0cfee;border-radius:1.6px;"></div>
</body></html>
